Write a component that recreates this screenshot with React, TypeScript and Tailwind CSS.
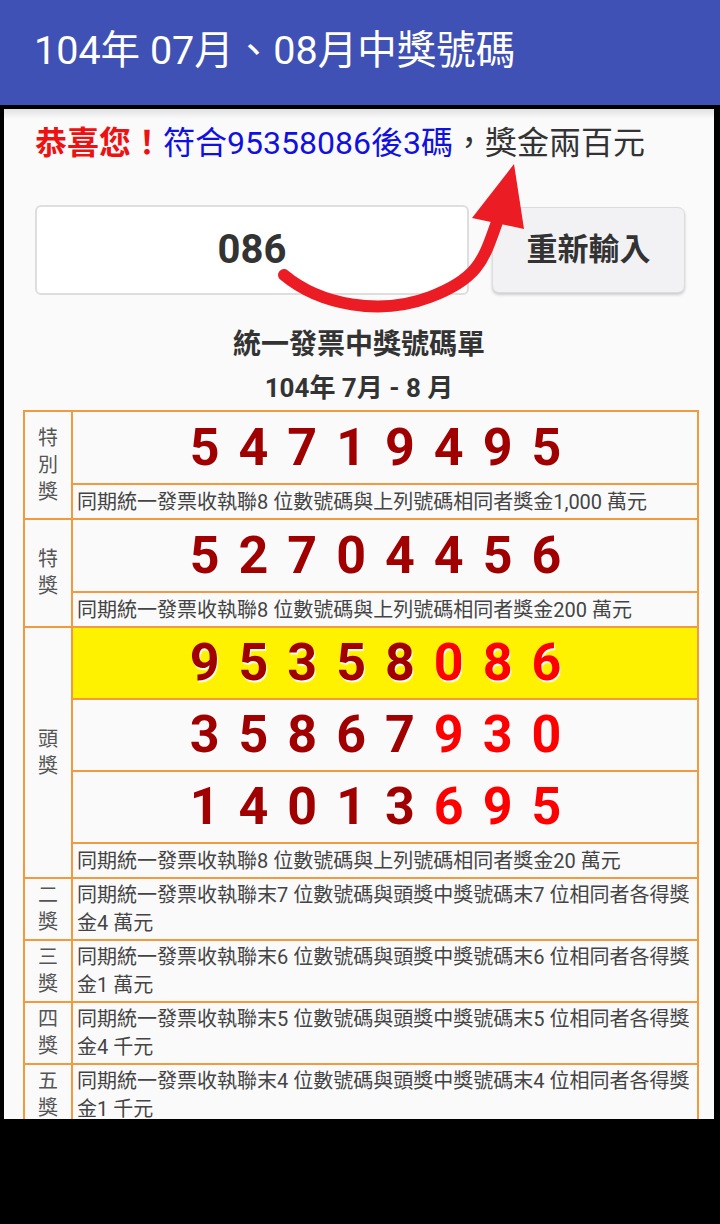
import React from 'react'

const font = { fontFamily: 'Roboto, "Noto Sans CJK TC", sans-serif' }

type Digit = { d: string; hot?: boolean }

const toDigits = (num: string, hotFrom = 99): Digit[] =>
    num.split('').map((d, i) => ({ d, hot: i >= hotFrom }))

const NumberRow = ({ digits, yellow, tall }: { digits: Digit[]; yellow?: boolean; tall?: boolean }) => (
    <td
        className={`${tall ? 'h-[73px]' : 'h-[72px]'} border-2 border-[#f29b3e] p-0 text-center align-middle ${yellow ? 'bg-[#fff200]' : ''}`}
    >
        <span className="inline-block text-[52px] font-bold leading-[60px] tracking-[19px] [text-shadow:1px_2px_1px_#ffffff]">
            {digits.map((x, i) => (
                <span key={i} className={x.hot ? 'text-[#ff0000]' : 'text-[#a00000]'}>
                    {x.d}
                </span>
            ))}
        </span>
    </td>
)

const DescRow = ({ children }: { children: React.ReactNode }) => (
    <td className="h-[35px] border-2 border-[#f29b3e] px-[4px] py-0 align-middle text-[20px] leading-[28px] text-[#444]">
        {children}
    </td>
)

const Label = ({ text, rows }: { text: string; rows: number }) => (
    <td
        rowSpan={rows}
        className="w-[48px] border-2 border-[#f29b3e] p-0 text-center align-middle text-[20px] leading-[27px] text-[#555]"
    >
        <div className="mx-auto flex w-[20px] flex-col items-center">
            {text.split('').map((c, i) => (
                <span key={i}>{c}</span>
            ))}
        </div>
    </td>
)

const lowerPrizes = [
    { label: '二獎', n: '7', amount: '金4 萬元' },
    { label: '三獎', n: '6', amount: '金1 萬元' },
    { label: '四獎', n: '5', amount: '金4 千元' },
    { label: '五獎', n: '4', amount: '金1 千元' },
]

export default function App() {
    return (
        <div className="relative h-[1224px] w-[720px] overflow-hidden bg-black" style={font}>
            {/* toolbar */}
            <div className="flex h-[105px] items-center bg-[#3f51b5] pl-[34px] pb-[4px]">
                <h1 className="text-[39.5px] font-normal leading-none text-white">104年 07月、08月中獎號碼</h1>
            </div>

            <div className="relative mt-[4px] ml-[4px] mr-[6px] h-[1010px] overflow-hidden bg-[#fafafa]">
                <div className="absolute inset-x-0 top-0 h-[10px] bg-gradient-to-b from-black/10 to-transparent" />

                {/* result message */}
                <p className="mt-[14px] pl-[31px] text-[32px] leading-[40px] text-[#333]">
                    <span className="font-bold text-[#ee1111]">恭喜您！</span>
                    <span className="text-[#1010e0]">符合95358086後3碼</span>
                    <span>，獎金兩百元</span>
                </p>

                {/* input row */}
                <div className="mt-[42px] flex items-center pl-[31px]">
                    <div className="flex h-[90px] w-[434px] items-center justify-center rounded-[6px] border-2 border-[#dedede] bg-white">
                        <span className="text-[40px] font-bold text-[#333]">086</span>
                    </div>
                    <button className="ml-[23px] flex h-[86px] w-[193px] items-center justify-center rounded-[7px] border border-[#dcdcdc] bg-[#f2f2f4] shadow-[0_2px_3px_rgba(0,0,0,0.18)]">
                        <span className="text-[31px] font-bold text-[#333]">重新輸入</span>
                    </button>
                </div>

                {/* titles */}
                <h2 className="mt-[33px] text-center text-[28px] font-bold leading-[34px] text-[#333]">統一發票中獎號碼單</h2>
                <h3 className="mt-[10px] text-center text-[26px] font-bold leading-[32px] text-[#333]">104年 7月 - 8 月</h3>

                {/* prize table */}
                <table className="mt-[6px] ml-[19px] w-[676px] table-fixed border-collapse">
                    <colgroup>
                        <col className="w-[48px]" />
                        <col />
                    </colgroup>
                    <tbody>
                        <tr>
                            <Label text="特別獎" rows={2} />
                            <NumberRow digits={toDigits('54719495')} tall />
                        </tr>
                        <tr>
                            <DescRow>同期統一發票收執聯8 位數號碼與上列號碼相同者獎金1,000 萬元</DescRow>
                        </tr>
                        <tr>
                            <Label text="特獎" rows={2} />
                            <NumberRow digits={toDigits('52704456')} tall />
                        </tr>
                        <tr>
                            <DescRow>同期統一發票收執聯8 位數號碼與上列號碼相同者獎金200 萬元</DescRow>
                        </tr>
                        <tr>
                            <Label text="頭獎" rows={4} />
                            <NumberRow digits={toDigits('95358086', 5)} yellow />
                        </tr>
                        <tr>
                            <NumberRow digits={toDigits('35867930', 5)} />
                        </tr>
                        <tr>
                            <NumberRow digits={toDigits('14013695', 5)} />
                        </tr>
                        <tr>
                            <DescRow>同期統一發票收執聯8 位數號碼與上列號碼相同者獎金20 萬元</DescRow>
                        </tr>
                        {lowerPrizes.map((p) => (
                            <tr key={p.label}>
                                <Label text={p.label} rows={1} />
                                <td className="h-[62px] border-2 border-[#f29b3e] px-[4px] py-[2px] align-middle text-[20px] leading-[28px] text-[#444]">
                                    同期統一發票收執聯末{p.n} 位數號碼與頭獎中獎號碼末{p.n} 位相同者各得獎{p.amount}
                                </td>
                            </tr>
                        ))}
                    </tbody>
                </table>
            </div>

            {/* red arrow pointing at the prize */}
            <svg className="pointer-events-none absolute left-0 top-0" width="720" height="1224" viewBox="0 0 720 1224">
                <path
                    d="M284 275 C 320 305, 380 316, 430 297 S 484 258, 497 222"
                    fill="none"
                    stroke="#ec1c24"
                    strokeWidth="12"
                    strokeLinecap="round"
                />
                <polygon points="514,164 472,218 524,229" fill="#ec1c24" />
            </svg>
        </div>
    )
}
